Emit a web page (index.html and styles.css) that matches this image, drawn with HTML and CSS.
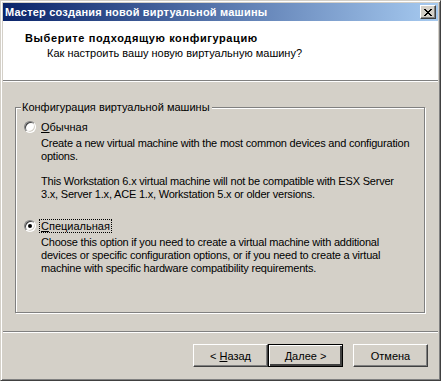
FILE: index.html
```html
<!DOCTYPE html>
<html lang="ru">
  <head>
    <meta charset="UTF-8" />
    <title>Мастер создания новой виртуальной машины</title>
    <link rel="stylesheet" href="styles.css">
  </head>
  <body>
    <div class="window">
      <div class="titlebar">
        <span class="title">Мастер создания новой виртуальной машины</span>
        <span class="close">
          <svg width="8" height="7" viewBox="0 0 8 7" shape-rendering="crispEdges">
            <path fill="#000" d="M0 0h2v1H0z M6 0h2v1H6z M1 1h2v1H1z M5 1h2v1H5z M2 2h4v1H2z M3 3h2v1H3z M2 4h4v1H2z M1 5h2v1H1z M5 5h2v1H5z M0 6h2v1H0z M6 6h2v1H6z" />
          </svg>
        </span>
      </div>

      <div class="header">
        <div class="heading">Выберите подходящую конфигурацию</div>
        <div class="subheading">Как настроить вашу новую виртуальную машину?</div>
      </div>
      <div class="etch"></div>

      <div class="main">
        <div class="group">
          <div class="group-title"><span>Конфигурация виртуальной машины</span></div>

          <div class="option">
            <div class="row">
              <span class="radio"></span>
              <span class="label"><u>О</u>бычная</span>
            </div>
            <div class="desc">
              <p>Create a new virtual machine with the most common devices and configuration<br>options.</p>
              <p>This Workstation 6.x virtual machine will not be compatible with ESX Server<br>3.x, Server 1.x, ACE 1.x, Workstation 5.x or older versions.</p>
            </div>
          </div>

          <div class="option">
            <div class="row">
              <span class="radio checked"></span>
              <span class="label focused"><u>С</u>пециальная</span>
            </div>
            <div class="desc">
              <p>Choose this option if you need to create a virtual machine with additional<br>devices or specific configuration options, or if you need to create a virtual<br>machine with specific hardware compatibility requirements.</p>
            </div>
          </div>
        </div>
      </div>

      <div class="etch"></div>
      <div class="footer">
        <span class="button"><span>&lt; <u>Н</u>азад</span></span>
        <span class="button default"><span><u>Д</u>алее &gt;</span></span>
        <span class="button cancel"><span>Отмена</span></span>
      </div>
    </div>
  </body>
</html>
```

FILE: styles.css
```css
* {
  box-sizing: border-box;
}

body {
  margin: 0;
  font-family: "Liberation Sans", Arial, sans-serif;
  font-size: 11px;
  color: #000;
}

.window {
  display: flex;
  flex-direction: column;
  width: 441px;
  height: 381px;
  padding: 2px;
  background: #d4d0c8;
  border: 1px solid;
  border-color: #d4d0c8 #404040 #404040 #d4d0c8;
  box-shadow: inset 1px 1px #fff, inset -1px -1px #808080;
}

.titlebar {
  display: flex;
  align-items: center;
  justify-content: space-between;
  height: 18px;
  padding: 0 2px 0 2px;
  background: linear-gradient(to right, #0a246a, #a6caf0);
}

.title {
  color: #fff;
  font-weight: bold;
  font-size: 11px;
  letter-spacing: 0.2px;
  line-height: 18px;
  white-space: nowrap;
}

.close {
  display: flex;
  align-items: center;
  justify-content: center;
  width: 16px;
  height: 14px;
  background: #d4d0c8;
  border: 1px solid;
  border-color: #fff #404040 #404040 #fff;
  box-shadow: inset -1px -1px #808080;
}

.header {
  height: 59px;
  padding: 11px 0 0 22px;
  background: #fff;
}

.heading {
  font-weight: bold;
  letter-spacing: 0.6px;
  line-height: 13px;
}

.subheading {
  margin-top: 2px;
  padding-left: 22px;
  line-height: 13px;
}

.etch {
  height: 2px;
  border-top: 1px solid #808080;
  border-bottom: 1px solid #fff;
}

.main {
  flex: 1;
  padding: 25px 13px 0 12px;
}

.group {
  height: 206px;
  padding: 0 8px;
  border: 1px solid #808080;
  box-shadow: inset 1px 1px #fff, 1px 1px #fff;
}

.group-title {
  height: 13px;
  margin-top: -7px;
  line-height: 13px;
}

.group-title span {
  margin-left: -3px;
  padding: 0 2px 0 1px;
  background: #d4d0c8;
}

.option {
  margin-top: 6px;
}

.option + .option {
  margin-top: 18px;
}

.row {
  display: flex;
  align-items: center;
  height: 14px;
}

.radio {
  position: relative;
  width: 12px;
  height: 12px;
  border-radius: 50%;
  background: #fff;
  border: 1px solid;
  border-color: #808080 #fff #fff #808080;
  box-shadow: inset 1px 1px #404040, inset -1px -1px #d4d0c8;
}

.radio.checked::after {
  content: "";
  position: absolute;
  left: 3px;
  top: 3px;
  width: 4px;
  height: 4px;
  border-radius: 50%;
  background: #000;
}

.label {
  margin-left: 3px;
  padding: 0 1px;
  line-height: 12px;
  border: 1px dotted transparent;
}

.label.focused {
  border-color: #000;
}

.desc {
  margin: 3px 0 0 17px;
  letter-spacing: -0.2px;
  white-space: nowrap;
}

.desc p {
  margin: 0;
  line-height: 13px;
}

.desc p + p {
  margin-top: 12px;
}

.footer {
  display: flex;
  justify-content: flex-end;
  height: 45px;
  padding: 11px 10px 0 0;
}

.button {
  display: flex;
  align-items: center;
  justify-content: center;
  width: 75px;
  height: 23px;
  background: #d4d0c8;
  border: 1px solid;
  border-color: #fff #404040 #404040 #fff;
  box-shadow: inset -1px -1px #808080;
}

.button span {
  white-space: pre;
}

.button.default {
  border-color: #000;
  box-shadow: inset 1px 1px #fff, inset -2px -2px #404040, inset -1px -1px #808080;
}

.button.cancel {
  margin-left: 10px;
}
```
